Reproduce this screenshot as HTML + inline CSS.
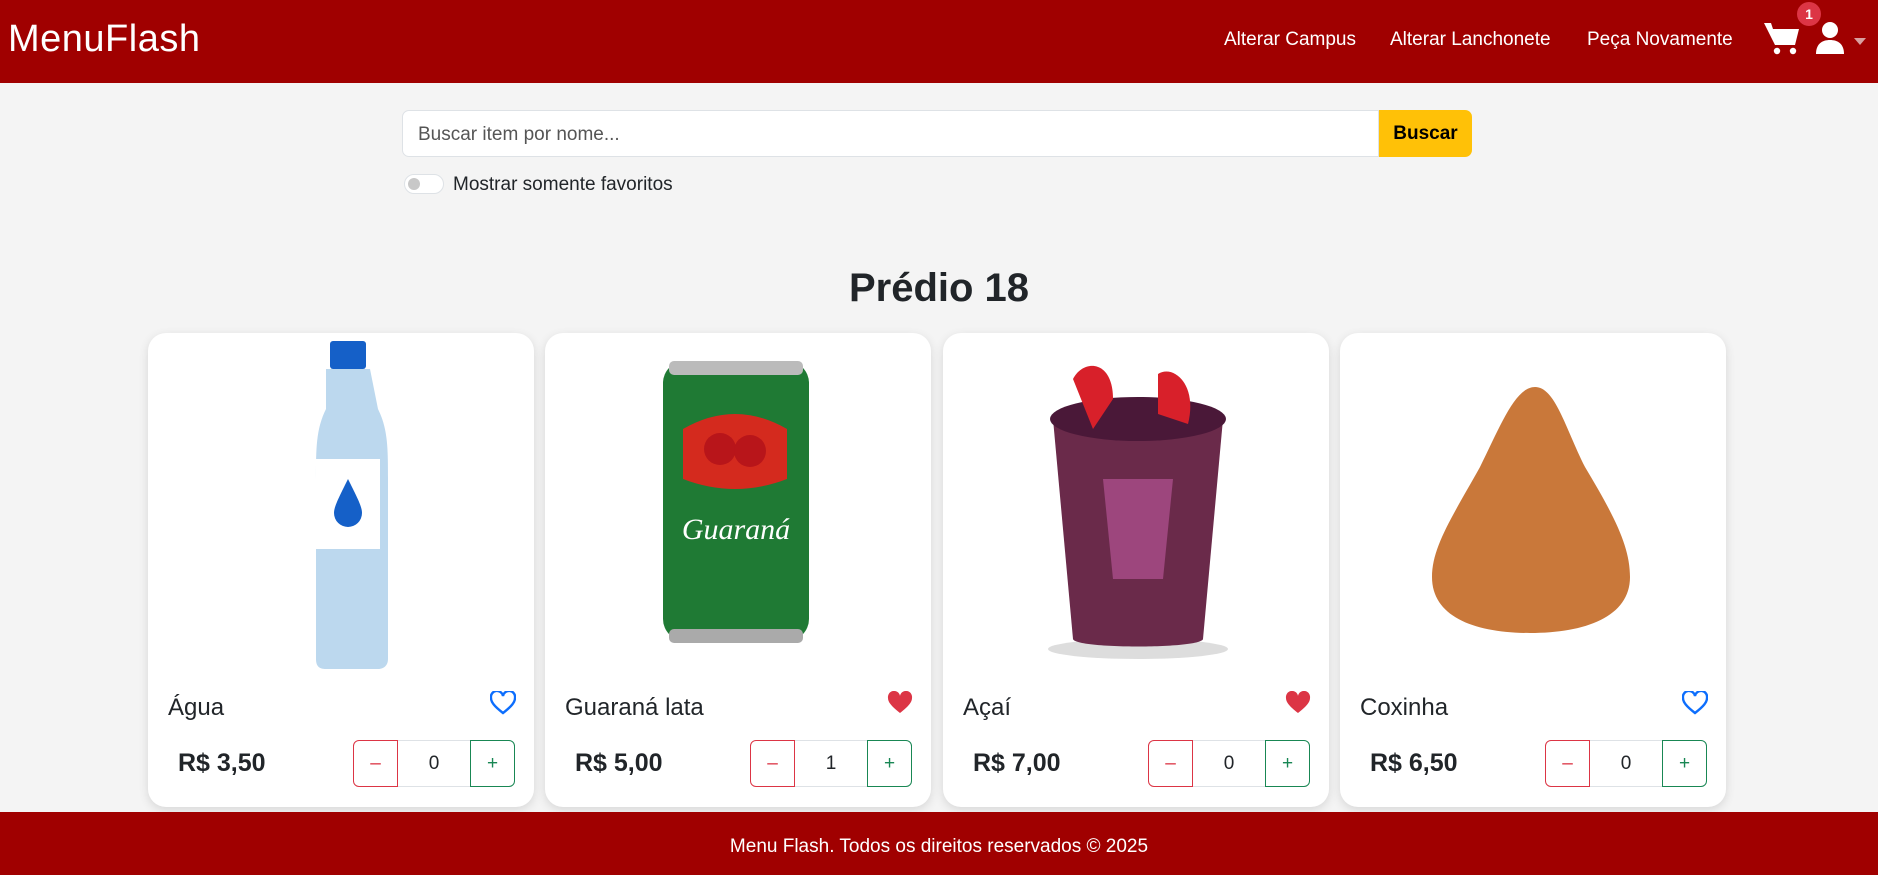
<!DOCTYPE html>
<html><head><meta charset="utf-8"><style>
*{box-sizing:border-box;margin:0;padding:0}
html,body{width:1878px;height:875px;overflow:hidden;background:#f4f4f4;font-family:"Liberation Sans",sans-serif;color:#212529;position:relative}
.hdr{position:absolute;left:0;top:0;width:1878px;height:83px;background:#a00000}
.logo{position:absolute;left:8px;top:18px;font-size:38px;color:#fff;font-weight:300;letter-spacing:0.5px}
.nav{position:absolute;top:29px;font-size:19px;color:#fff}
.badge{position:absolute;left:1797px;top:2px;width:24px;height:24px;border-radius:12px;background:#dc3545;color:#fff;font-size:14px;font-weight:bold;text-align:center;line-height:24px}
.search{position:absolute;left:402px;top:110px;width:977px;height:47px;background:#fff;border:1px solid #dee2e6;border-radius:7px 0 0 7px;font-size:19px;color:#555;padding:13px 15px}
.btn{position:absolute;left:1379px;top:110px;width:93px;height:47px;background:#ffc107;border-radius:0 7px 7px 0;font-weight:bold;font-size:19px;text-align:center;line-height:47px;color:#000}
.tog{position:absolute;left:404px;top:174px;width:40px;height:20px;border:1px solid #dee2e6;border-radius:10px;background:#fff}
.tog:after{content:"";position:absolute;left:3px;top:3px;width:12px;height:12px;border-radius:6px;background:#c8c8c8}
.togl{position:absolute;left:453px;top:174px;font-size:19px}
h1{position:absolute;left:0;width:1878px;top:266px;text-align:center;font-size:40px;font-weight:bold}
.card{position:absolute;top:333px;width:386px;height:474px;background:#fff;border-radius:18px;box-shadow:0 3px 10px rgba(0,0,0,.12)}
.img{position:absolute;left:0;top:6px;width:386px;height:332px}
.name{position:absolute;left:20px;top:361px;font-size:24px}
.heart{position:absolute;left:342px;top:358px}
.price{position:absolute;left:30px;top:416px;font-size:25px;font-weight:bold}
.qty{position:absolute;left:205px;top:407px;width:162px;height:47px}
.m,.p,.v{position:absolute;top:0;height:47px;text-align:center;line-height:45px;font-size:19px}
.m{left:0;width:45px;border:1px solid #dc3545;color:#dc3545;border-radius:6px 0 0 6px}
.v{left:45px;width:72px;border-top:1px solid #dee2e6;border-bottom:1px solid #dee2e6}
.p{left:117px;width:45px;border:1px solid #198754;color:#198754;border-radius:0 6px 6px 0}
.ftr{position:absolute;left:0;top:812px;width:1878px;height:63px;background:#a00000;color:#fff;font-size:19px;text-align:center;line-height:70px}
</style></head><body>
<div class="hdr">
<div class="logo">MenuFlash</div>
<div class="nav" style="left:1224px">Alterar Campus</div>
<div class="nav" style="left:1390px">Alterar Lanchonete</div>
<div class="nav" style="left:1587px">Peça Novamente</div>
<svg style="position:absolute;left:1764px;top:22px" width="36" height="34" viewBox="0 0 36 34"><path d="M0 1h7l2 6h26l-4 16H11z" fill="#fff"/><circle cx="13" cy="29" r="3.2" fill="#fff"/><circle cx="29" cy="29" r="3.2" fill="#fff"/></svg>
<div class="badge">1</div>
<svg style="position:absolute;left:1816px;top:22px" width="28" height="32" viewBox="0 0 28 32"><circle cx="14" cy="8" r="8" fill="#fff"/><path d="M0 32c0-10 6-14 14-14s14 4 14 14z" fill="#fff"/></svg>
<svg style="position:absolute;left:1854px;top:38px" width="12" height="7"><path d="M0 0h12L6 7z" fill="#d9a0a0"/></svg>
</div>
<div class="search">Buscar item por nome...</div><div class="btn">Buscar</div>
<div class="tog"></div><div class="togl">Mostrar somente favoritos</div>
<h1>Prédio 18</h1>

<div class="card" style="left:148px">
<svg class="img" viewBox="0 0 386 332"><rect x="182" y="2" width="36" height="28" rx="3" fill="#1560c8"/><path d="M178 30h44l8 40c10 20 10 40 10 70v180c0 8-6 10-10 10h-52c-6 0-10-2-10-10V140c0-30 0-50 10-70z" fill="#bcd8ee"/><rect x="168" y="120" width="64" height="90" fill="#fff"/><path d="M200 140c-10 20-14 28-14 34a14 14 0 0 0 28 0c0-6-4-14-14-34z" fill="#1560c8"/></svg>
<div class="name">Água</div>
<svg class="heart" width="26" height="24" viewBox="0 0 26 24"><path d="M13 22C4 15 1 11 1 7a6 6 0 0 1 12-2 6 6 0 0 1 12 2c0 4-3 8-12 15z" fill="none" stroke="#0d6efd" stroke-width="2.4"/></svg>
<div class="price">R$ 3,50</div>
<div class="qty"><div class="m">–</div><div class="v">0</div><div class="p">+</div></div>
</div>

<div class="card" style="left:545px">
<svg class="img" viewBox="0 0 386 332"><rect x="118" y="22" width="146" height="280" rx="22" fill="#1f7a34"/><rect x="124" y="22" width="134" height="14" rx="5" fill="#bbb"/><rect x="124" y="290" width="134" height="14" rx="5" fill="#aaa"/><path d="M138 90q52-30 104 0v50q-52 20-104 0z" fill="#d42a1e"/><circle cx="175" cy="110" r="16" fill="#b8151a"/><circle cx="205" cy="112" r="16" fill="#b8151a"/><text x="191" y="200" fill="#fff" font-size="30" font-style="italic" text-anchor="middle" font-family="Liberation Serif">Guaraná</text></svg>
<div class="name">Guaraná lata</div>
<svg class="heart" width="26" height="24" viewBox="0 0 26 24"><path d="M13 22C4 15 1 11 1 7a6 6 0 0 1 12-2 6 6 0 0 1 12 2c0 4-3 8-12 15z" fill="#dc3545"/></svg>
<div class="price">R$ 5,00</div>
<div class="qty"><div class="m">–</div><div class="v">1</div><div class="p">+</div></div>
</div>

<div class="card" style="left:943px">
<svg class="img" viewBox="0 0 386 332"><ellipse cx="195" cy="310" rx="90" ry="10" fill="#ddd"/><path d="M110 80h170l-20 220c-2 10-128 10-130 0z" fill="#6a2a4a"/><ellipse cx="195" cy="80" rx="88" ry="22" fill="#4a1838"/><path d="M130 40c10-20 40-20 40 20l-20 30z" fill="#d8202a"/><path d="M215 35c15-10 40 10 30 50l-30-10z" fill="#d8202a"/><path d="M160 140h70l-10 100h-50z" fill="#c05aa0" opacity=".6"/></svg>
<div class="name">Açaí</div>
<svg class="heart" width="26" height="24" viewBox="0 0 26 24"><path d="M13 22C4 15 1 11 1 7a6 6 0 0 1 12-2 6 6 0 0 1 12 2c0 4-3 8-12 15z" fill="#dc3545"/></svg>
<div class="price">R$ 7,00</div>
<div class="qty"><div class="m">–</div><div class="v">0</div><div class="p">+</div></div>
</div>

<div class="card" style="left:1340px">
<svg class="img" viewBox="0 0 386 332"><path d="M195 48c20 0 30 40 50 80 30 50 45 80 45 110 0 40-45 56-100 56s-98-16-98-56c0-30 20-60 48-110 20-40 35-80 55-80z" fill="#c9783a"/></svg>
<div class="name">Coxinha</div>
<svg class="heart" width="26" height="24" viewBox="0 0 26 24"><path d="M13 22C4 15 1 11 1 7a6 6 0 0 1 12-2 6 6 0 0 1 12 2c0 4-3 8-12 15z" fill="none" stroke="#0d6efd" stroke-width="2.4"/></svg>
<div class="price">R$ 6,50</div>
<div class="qty"><div class="m">–</div><div class="v">0</div><div class="p">+</div></div>
</div>

<div class="ftr">Menu Flash. Todos os direitos reservados © 2025</div>
</body></html>
